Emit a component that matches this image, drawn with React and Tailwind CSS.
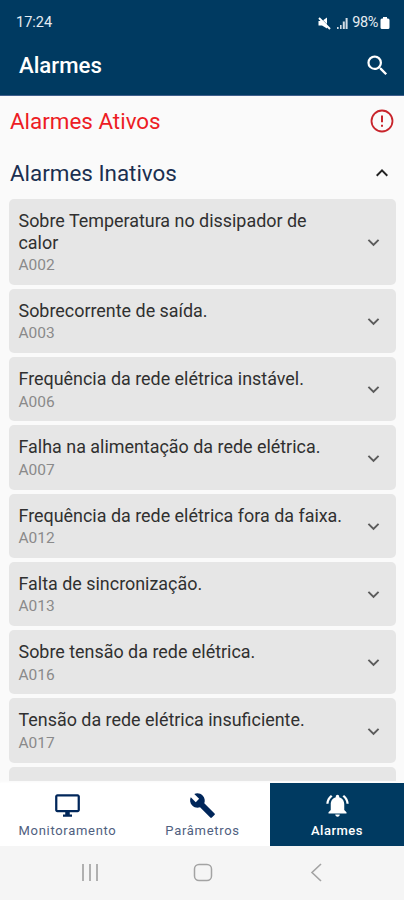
import { useState } from "react";
import {
  MdBuild,
  MdExpandLess,
  MdExpandMore,
  MdNotificationsActive,
  MdOutlineDesktopWindows,
  MdSearch,
} from "react-icons/md";

const alarms = [
  { code: "A002", name: "Sobre Temperatura no dissipador de calor" },
  { code: "A003", name: "Sobrecorrente de saída." },
  { code: "A006", name: "Frequência da rede elétrica instável." },
  { code: "A007", name: "Falha na alimentação da rede elétrica." },
  { code: "A012", name: "Frequência da rede elétrica fora da faixa." },
  { code: "A013", name: "Falta de sincronização." },
  { code: "A016", name: "Sobre tensão da rede elétrica." },
  { code: "A017", name: "Tensão da rede elétrica insuficiente." },
];

const tabs = [
  { id: "monitor", label: "Monitoramento", icon: MdOutlineDesktopWindows },
  { id: "params", label: "Parâmetros", icon: MdBuild },
  { id: "alarms", label: "Alarmes", icon: MdNotificationsActive },
];

function StatusBar() {
  return (
    <div className="flex h-[46px] items-center justify-between pl-[16px] pr-[14px] text-white">
      <span className="text-[14.500px] text-[#e6ecf2]">17:24</span>
      <div className="flex items-center">
        {/* Muted speaker */}
        <svg width="13" height="13" viewBox="0 0 13 13" fill="currentColor">
          <path d="M.5 4h3.500L9 .5v11L4 8.500H.5z" />
          <path d="M1.500 0L13 11.500" stroke="#003a61" strokeWidth=".8" />
          <path d="M1 1l11 11" stroke="currentColor" strokeWidth="2" />
        </svg>
        {/* Signal bars */}
        <svg className="ml-[5px]" width="12" height="12" viewBox="0 0 12 12" fill="#d3dde6">
          <path d="M1 10h1.600v2H1zM4 8h1.600v4H4zM6.800 4.500h2V12h-2zM9.600 1h2v11h-2z" />
        </svg>
        <span className="ml-[4px] text-[14.500px] tracking-[-0.400px] text-[#e6ecf2]">98%</span>
        <svg className="ml-[2px]" width="10" height="12" viewBox="0 0 10 12" fill="currentColor">
          <path d="M3 0h4v1.500h1a1.500 1.500 0 0 1 1.500 1.500v7.500A1.500 1.500 0 0 1 8 12H2A1.500 1.500 0 0 1 .5 10.500V3A1.500 1.500 0 0 1 2 1.500h1z" />
        </svg>
      </div>
    </div>
  );
}

function AlertIcon() {
  return (
    <svg width="24" height="24" viewBox="0 0 24 24" fill="none" stroke="#c8242b">
      <circle cx="12" cy="12" r="10.500" strokeWidth="1.800" />
      <path d="M12 6.500v6.800M12 15.800v2" strokeWidth="2" />
    </svg>
  );
}

function AlarmCard({ alarm }) {
  return (
    <div className="flex shrink-0 items-center justify-between rounded-[5px] bg-[#e6e6e6] pb-[9.750px] pl-[9.500px] pr-[11px] pt-[11px]">
      <div className="w-[327px]">
        <div className="text-[17.920px] leading-[21.500px] text-[#303030]">{alarm.name}</div>
        <div className="pt-[2px] text-[15.500px] leading-[20px] text-[#8a8a8a]">{alarm.code}</div>
      </div>
      <MdExpandMore className="size-[23px] shrink-0 text-[#5c5c5c]" />
    </div>
  );
}

export default function App() {
  const [activeTab, setActiveTab] = useState("alarms");
  const [open, setOpen] = useState(true);

  return (
    <div className="flex h-[900px] w-full flex-col overflow-hidden bg-[#fafafa] font-['Roboto',sans-serif]">
      <header className="h-[96px] shrink-0 border-b border-[#3f5f8c] bg-[#003a61]">
        <StatusBar />
        <div className="flex h-[40px] items-center justify-between pl-[19px] pr-[13px] text-white">
          <h1 className="text-[22.200px] font-medium">Alarmes</h1>
          <MdSearch className="mb-[2px] size-[27px]" />
        </div>
      </header>

      <main className="flex min-h-0 flex-1 flex-col overflow-hidden">
        <div className="flex h-[50px] shrink-0 items-center justify-between pl-[10px] pr-[10px]">
          <h2 className="pt-[2px] text-[22.400px] text-[#ed1c24]">Alarmes Ativos</h2>
          <AlertIcon />
        </div>
        <button
          onClick={() => setOpen(!open)}
          className="flex h-[53px] shrink-0 items-center justify-between pl-[10px] pr-[10px]"
        >
          <h2 className="pt-[2px] text-[22.400px] text-[#1b2f50]">Alarmes Inativos</h2>
          <MdExpandLess className="size-[24px] text-[#222]" />
        </button>
        {open && (
          <div className="flex min-h-0 flex-col gap-[4px] pl-[9px] pr-[8px]">
            {alarms.map((alarm) => (
              <AlarmCard key={alarm.code} alarm={alarm} />
            ))}
            {/* Next card peeking out above the tabs */}
            <div className="h-[14px] shrink-0 rounded-t-[5px] bg-[#e6e6e6]" />
          </div>
        )}
      </main>

      {/* Bottom tabs */}
      <nav className="z-10 grid h-[63px] shrink-0 grid-cols-[135px_135px_1fr] bg-white shadow-[0_-1px_2px_rgba(255,255,255,0.9)]">
        {tabs.map(({ id, label, icon: Icon }) => (
          <button
            key={id}
            onClick={() => setActiveTab(id)}
            className={`flex flex-col items-center pt-[9px] ${
              activeTab === id ? "bg-[#003a61] text-white" : "text-[#00265a]"
            }`}
          >
            <Icon className="size-[27px]" />
            <span
              className={`pt-[1px] text-[13px] leading-[22px] ${
                activeTab === id ? "font-medium tracking-[0.5px]" : "tracking-[0.7px] text-[#4f6080]"
              }`}
            >
              {label}
            </span>
          </button>
        ))}
      </nav>

      {/* System navigation */}
      <div className="flex h-[54px] shrink-0 items-center justify-between bg-[#f5f5f5] pl-[80px] pr-[78px] text-[#a3a3a3]">
        <svg width="20" height="20" viewBox="0 0 20 20" stroke="#b0b0b0" strokeWidth="2">
          <path d="M3 1v17M10 1v17M17 1v17" />
        </svg>
        <svg width="20" height="20" viewBox="0 0 20 20" fill="none" stroke="currentColor" strokeWidth="1.500">
          <rect x="1.500" y="1.500" width="17" height="16" rx="4.500" />
        </svg>
        <svg width="20" height="20" viewBox="0 0 20 20" fill="none" stroke="currentColor" strokeWidth="1.600">
          <path d="M15 1L6 9.500l9 8.500" />
        </svg>
      </div>
    </div>
  );
}
